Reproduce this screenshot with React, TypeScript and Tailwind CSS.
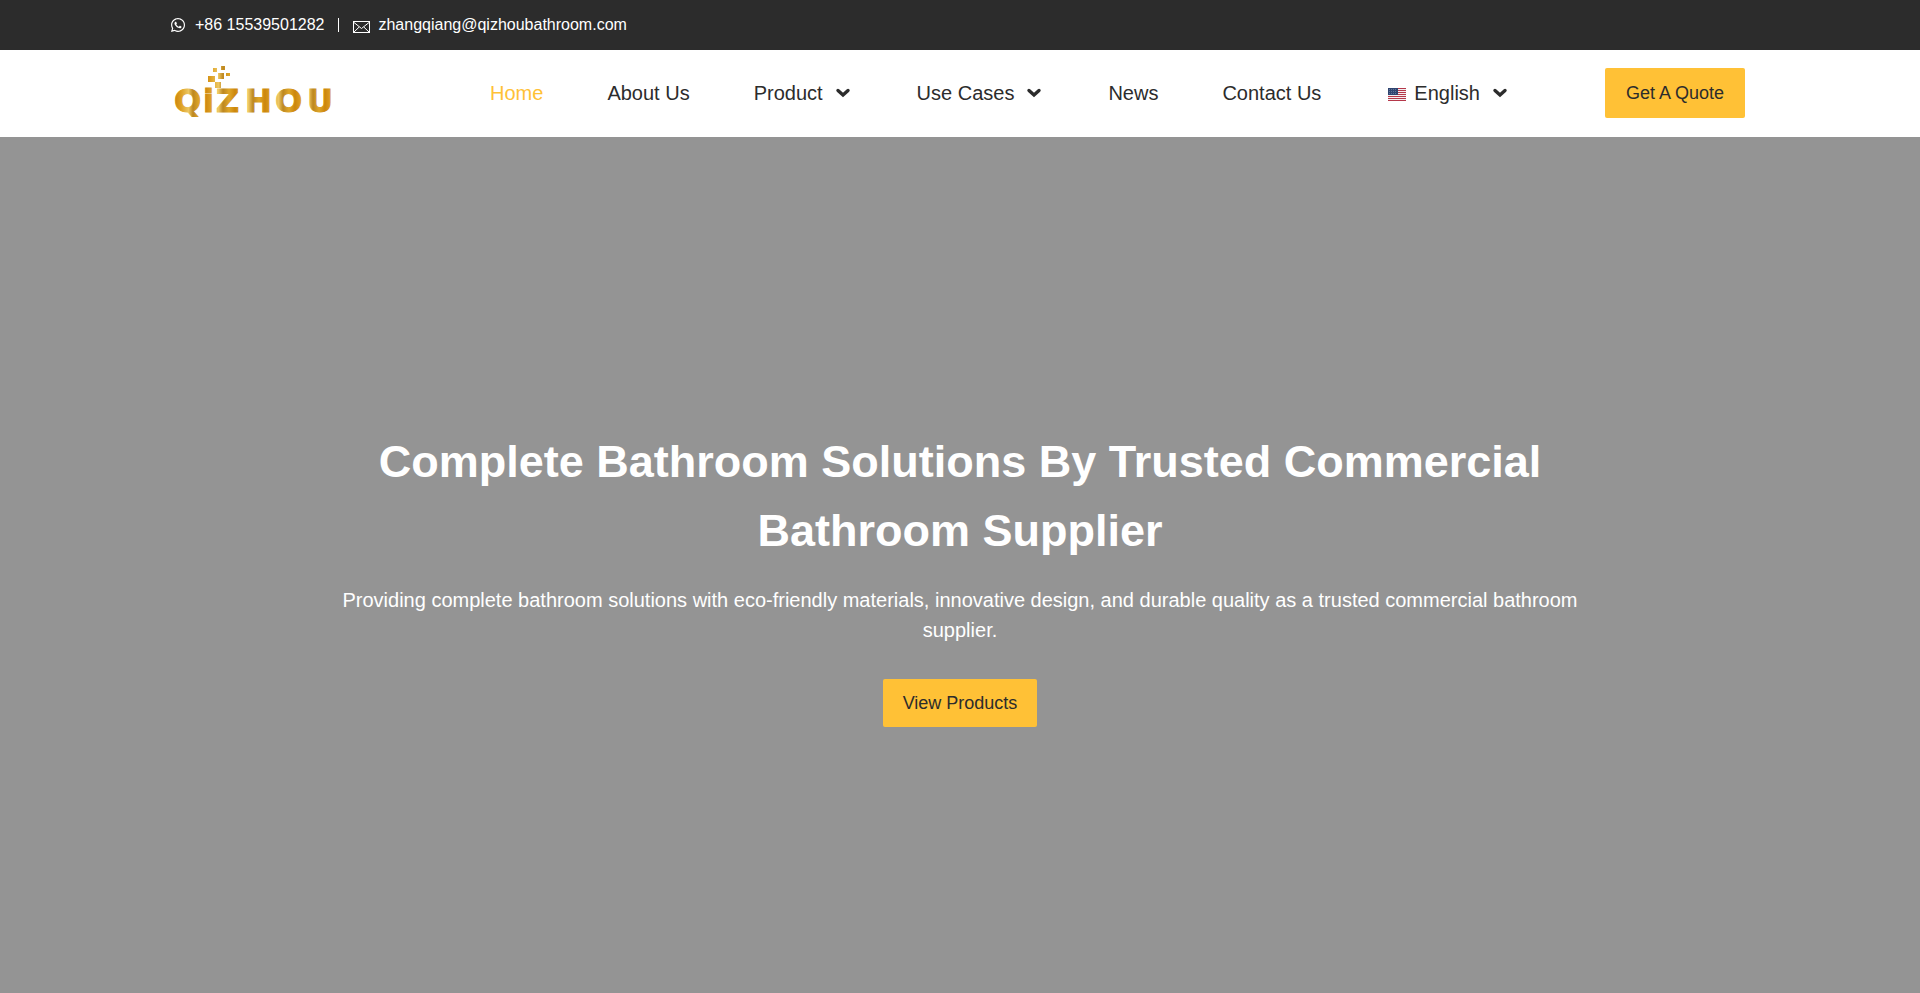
import { FaWhatsapp } from 'react-icons/fa';

// ============================================
// HOME - top bar, main navigation, hero
// ============================================

interface NavItem {
  label: string;
  active?: boolean;
  flag?: boolean;
  menu?: boolean;
}

const NAV_ITEMS: NavItem[] = [
  { label: 'Home', active: true },
  { label: 'About Us' },
  { label: 'Product', menu: true },
  { label: 'Use Cases', menu: true },
  { label: 'News' },
  { label: 'Contact Us' },
  { label: 'English', flag: true, menu: true },
];

const MailIcon = () => (
  <svg width="17" height="12" viewBox="0 0 17 12" fill="none" stroke="currentColor" aria-hidden="true">
    <rect x="0.5" y="0.5" width="16" height="11" />
    <path d="M1 1.5 8.5 7.5l7.500-6M1 11l5.200-5M16 11l-5.200-5" />
  </svg>
);

const ChevronIcon = () => (
  <svg width="20" height="20" viewBox="0 0 20 20" fill="none" stroke="currentColor" strokeWidth="3.4" aria-hidden="true">
    <path d="M5 7.5 10 12 15 7.5" strokeLinecap="round" />
  </svg>
);

const FlagIcon = () => (
  <svg width="18" height="13" viewBox="0 0 18 13" aria-hidden="true">
    <rect width="18" height="13" fill="#f4eef0" />
    {[0, 2, 4, 6, 8, 10, 12].map((y) => (
      <rect key={y} y={y} width="18" height="1" fill="#b5384a" />
    ))}
    <rect width="10" height="7" fill="#2f4570" />
    {[1, 3, 5].map((y) =>
      [1, 3, 5, 7].map((x) => <rect key={`${x}-${y}`} x={x} y={y} width="1" height="1" fill="#60739a" />)
    )}
  </svg>
);

const Logo = () => (
  <svg width="165" height="60" viewBox="0 0 165 60" role="img" aria-label="QiZHOU">
    <defs>
      <linearGradient id="gold" gradientUnits="userSpaceOnUse" x1="3" y1="0" x2="33" y2="0" spreadMethod="repeat">
        <stop offset="0" stopColor="#cc860c" />
        <stop offset="0.2" stopColor="#dda024" />
        <stop offset="0.45" stopColor="#ecc662" />
        <stop offset="0.6" stopColor="#bd8720" />
        <stop offset="0.8" stopColor="#dfa628" />
        <stop offset="1" stopColor="#cc860c" />
      </linearGradient>
    </defs>
    <g fill="url(#gold)">
      <rect x="41" y="5" width="4" height="4" />
      <rect x="49" y="3" width="4" height="4" />
      <rect x="46" y="10" width="6" height="6" />
      <rect x="54" y="10" width="4" height="3" />
      <rect x="36" y="13" width="7" height="6" />
      <rect x="43" y="19" width="6" height="6" />
      <text
        x="2 31 44 73 103 135"
        y="49"
        fontSize="32"
        fontWeight="700"
        fontFamily="'DejaVu Sans', sans-serif"
        stroke="url(#gold)"
        strokeWidth="1"
      >
        QiZHOU
      </text>
    </g>
  </svg>
);

const TopBar = () => (
  <div className="bg-[#2c2c2c] text-white">
    <div className="mx-auto flex h-[50px] max-w-[1580px] items-center text-base">
      <a href="#whatsapp" className="flex items-center gap-[9px]">
        <FaWhatsapp size={16} />
        <span>+86 15539501282</span>
      </a>
      <span className="mx-3.5 h-3.5 w-px bg-white" />
      <a href="#mail" className="flex items-center gap-2">
        <span className="pt-1">
          <MailIcon />
        </span>
        <span>zhangqiang@qizhoubathroom.com</span>
      </a>
    </div>
  </div>
);

const Header = () => (
  <header className="bg-white">
    <div className="mx-auto flex h-[87px] max-w-[1580px] items-center justify-between pr-[5px] pb-0.5">
      <a href="#home" className="w-[225px] pl-0.5">
        <Logo />
      </a>

      <nav className="flex items-center gap-16 text-xl">
        {NAV_ITEMS.map((item) => (
          <a
            key={item.label}
            href="#nav"
            className={`flex items-center whitespace-nowrap ${item.active ? 'text-[#ffc136]' : 'text-[#2c2c2c]'}`}
          >
            {item.flag && (
              <span className="pt-1 pr-2 pl-[3px]">
                <FlagIcon />
              </span>
            )}
            {item.label}
            {item.menu && (
              <span className="pl-2.5">
                <ChevronIcon />
              </span>
            )}
          </a>
        ))}
      </nav>

      <button type="button" className="h-[50px] w-[140px] rounded-xs bg-[#ffc136] text-lg text-[#2c2c2c]">
        Get A Quote
      </button>
    </div>
  </header>
);

const Hero = () => (
  <main className="flex flex-1 flex-col items-center justify-center bg-[#949494] pt-6 text-center text-white">
    <div className="max-w-[1280px]">
      <h1 className="text-[45px] leading-[69px] font-bold">
        Complete Bathroom Solutions By Trusted Commercial Bathroom Supplier
      </h1>
      <p className="mt-5 text-xl leading-[30px]">
        Providing complete bathroom solutions with eco-friendly materials, innovative design, and durable quality as a
        trusted commercial bathroom supplier.
      </p>
      <button type="button" className="mt-[34px] h-12 rounded-xs bg-[#ffc136] px-5 text-lg text-[#2c2c2c]">
        View Products
      </button>
    </div>
  </main>
);

export default function App() {
  return (
    <div className="flex min-h-screen flex-col font-['Liberation_Sans',Arial,sans-serif]">
      <TopBar />
      <Header />
      <Hero />
    </div>
  );
}
